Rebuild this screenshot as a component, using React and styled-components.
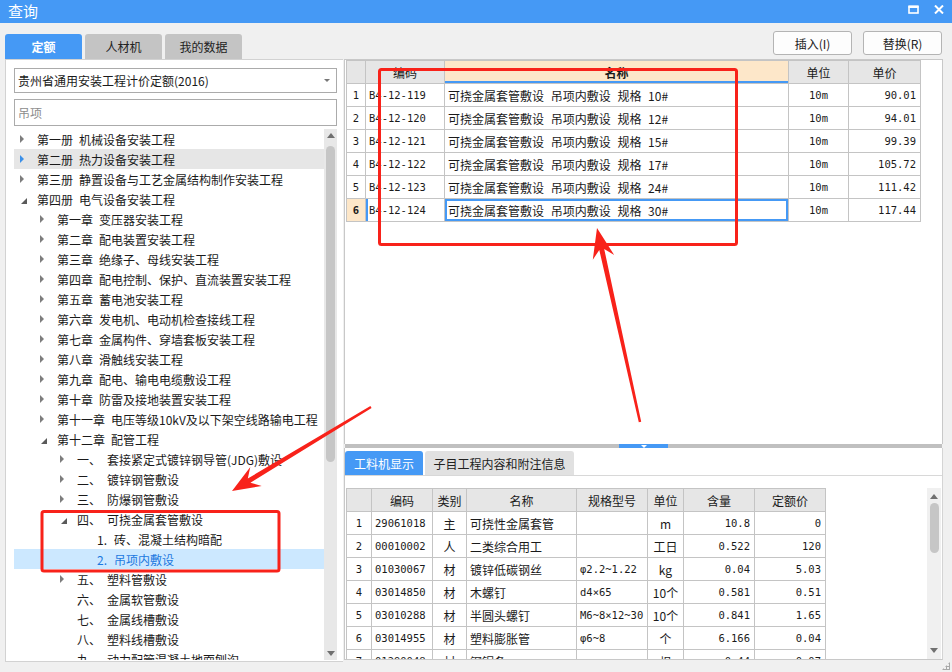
import React from 'react';
import styled, { createGlobalStyle } from 'styled-components';

const CJK = '"Noto Sans CJK SC", "Noto Sans", sans-serif';
const MONO = '"DejaVu Sans Mono", "Noto Sans CJK SC", monospace';

const GlobalStyle = createGlobalStyle`
  html, body { margin: 0; padding: 0; background: #f0f0f0; }
  body { font-family: ${CJK}; font-size: 12px; color: #1a1a1a; }
  * { box-sizing: border-box; }
`;

const Window = styled.div`
  position: relative;
  width: 952px;
  height: 672px;
  overflow: hidden;
  display: flex;
  flex-direction: column;
  background: #f0f0f0;
`;

const TitleBar = styled.div`
  height: 23px;
  flex: none;
  background: #4599f5;
  display: flex;
  align-items: center;
  justify-content: space-between;
  padding: 0 8px 0 8px;
  color: #fff;
  font-size: 15px;
  line-height: 23px;
`;

const TitleText = styled.span`
  margin-top: -3px;
`;

const WinButtons = styled.div`
  display: flex;
  align-items: center;
  gap: 15px;
  margin-top: -5px;
`;

const Toolbar = styled.div`
  height: 36px;
  flex: none;
  display: flex;
  justify-content: space-between;
  padding: 0 10px 0 5px;
`;

const Tabs = styled.div`
  display: flex;
  align-items: flex-end;
  gap: ${p => p.$gap}px;
`;

const Tab = styled.div`
  width: ${p => p.$w}px;
  height: ${p => p.$h}px;
  display: flex;
  align-items: center;
  justify-content: center;
  font-size: 12px;
  border-radius: 3px 3px 0 0;
  background: ${p => (p.$active ? '#4599f5' : p.$light ? '#e1e1e1' : '#c4c4c4')};
  color: ${p => (p.$active ? '#fff' : '#222')};
  font-weight: ${p => (p.$bold ? 700 : 400)};
`;

const Buttons = styled.div`
  display: flex;
  gap: 11px;
  padding-top: 8px;
`;

const Button = styled.div`
  width: ${p => p.$w}px;
  height: 24px;
  border: 1px solid #b4b4b4;
  border-radius: 3px;
  background: #fdfdfd;
  display: flex;
  align-items: center;
  justify-content: center;
  font-size: 12px;
  color: #222;
`;

const Main = styled.div`
  display: flex;
  height: 603px;
  padding-left: 5px;
`;

const LeftPanel = styled.div`
  width: 338px;
  flex: none;
  background: #fff;
  border: 1px solid #d2d2d2;
  border-right: none;
  display: flex;
  flex-direction: column;
  padding: 8px 6px 0 8px;
`;

const Select = styled.div`
  height: 25px;
  flex: none;
  border: 1px solid #ababab;
  display: flex;
  align-items: center;
  justify-content: space-between;
  padding: 0 6px 0 3px;
  font-size: 12px;
`;

const Caret = styled.span`
  width: 0;
  height: 0;
  border-left: 3px solid transparent;
  border-right: 3px solid transparent;
  border-top: 3px solid #777;
`;

const Search = styled.div`
  height: 27px;
  flex: none;
  margin-top: 6px;
  border: 1px solid #ababab;
  display: flex;
  align-items: center;
  padding: 0 3px;
  color: #8c8c8c;
  font-size: 12px;
`;

const TreeWrap = styled.div`
  flex: 1;
  margin-top: 3px;
  margin-bottom: 1px;
  display: flex;
  overflow: hidden;
`;

const TreeList = styled.div`
  flex: 1;
  overflow: hidden;
`;

const TreeRow = styled.div`
  height: 20px;
  display: flex;
  align-items: center;
  padding-left: ${p => 6 + p.$level * 20}px;
  background: ${p => (p.$sel ? '#cce8ff' : p.$hover ? '#e6e6e6' : 'transparent')};
  color: ${p => (p.$sel ? '#1c78e0' : '#1a1a1a')};
  white-space: nowrap;
  font-size: 12px;
`;

const Toggle = styled.span`
  width: 17px;
  height: 20px;
  flex: none;
  display: flex;
  align-items: center;
`;

const Collapsed = styled.span`
  width: 0;
  height: 0;
  border-left: 4px solid ${p => (p.$blue ? '#3b8fe8' : '#7d7d7d')};
  border-top: 4px solid transparent;
  border-bottom: 4px solid transparent;
`;

const Expanded = styled.span`
  width: 0;
  height: 0;
  margin-left: 1px;
  margin-top: 3px;
  border-bottom: 6px solid #5a5a5a;
  border-left: 6px solid transparent;
`;

const Label = styled.span`
  display: flex;
  gap: ${p => p.$gap}px;
`;

const VScroll = styled.div`
  width: ${p => p.$w}px;
  flex: none;
  background: ${p => p.$bg};
  display: flex;
  flex-direction: column;
  align-items: center;
  margin-right: ${p => p.$mr || 0}px;
`;

const ArrowUp = styled.span`
  width: 0;
  height: 0;
  margin-top: ${p => p.$mt}px;
  border-left: 4px solid transparent;
  border-right: 4px solid transparent;
  border-bottom: 5px solid #707070;
`;

const ArrowDown = styled.span`
  width: 0;
  height: 0;
  margin-top: auto;
  margin-bottom: ${p => p.$mb}px;
  border-left: 4px solid transparent;
  border-right: 4px solid transparent;
  border-top: 5px solid #707070;
`;

const Thumb = styled.span`
  width: 9px;
  height: ${p => p.$h}px;
  margin-top: ${p => p.$mt}px;
  border-radius: 5px;
  background: #c6c6c6;
`;

const RightCol = styled.div`
  width: 600px;
  flex: none;
  display: flex;
  flex-direction: column;
  padding-bottom: 2px;
`;

const UpperPanel = styled.div`
  height: 385px;
  flex: none;
  margin-left: 1px;
  background: #fff;
  border: 1px solid #c8c8c8;
  border-bottom: none;
  padding-left: 1px;
`;

const Splitter = styled.div`
  height: 4px;
  flex: none;
  margin-left: 2px;
  margin-right: 1px;
  display: flex;
  background: #c0c0c0;
`;

const SplitHandle = styled.div`
  width: 49px;
  margin-left: 274px;
  background: #4599f5;
  display: flex;
  justify-content: center;
  padding-top: 1px;
  &::after {
    content: '';
    width: 0;
    height: 0;
    border-left: 3px solid transparent;
    border-right: 3px solid transparent;
    border-top: 3px solid #fff;
  }
`;

const LowerPanel = styled.div`
  flex: 1;
  margin-left: 1px;
  background: #fff;
  border-left: 1px solid #c8c8c8;
  border-right: 1px solid #d4d4d4;
  border-bottom: 1px solid #c8c8c8;
  display: flex;
  flex-direction: column;
  overflow: hidden;
`;

const LowerTabs = styled.div`
  flex: none;
  padding-top: 3px;
  border-bottom: 1px solid #d8d8d8;
`;

const Gap = styled.div`
  height: 12px;
  flex: none;
`;

const GridArea = styled.div`
  flex: 1;
  display: flex;
  overflow: hidden;
  padding-left: 1px;
`;

const GridBox = styled.div`
  flex: 1;
  overflow: hidden;
`;

const Grid = styled.div`
  display: grid;
  grid-template-columns: ${p => p.$cols};
  border-left: 1px solid #c4c4c4;
  border-top: 1px solid #c4c4c4;
  width: max-content;
`;

const Cell = styled.div`
  height: 23px;
  border-right: 1px solid #c4c4c4;
  border-bottom: 1px solid #c4c4c4;
  display: flex;
  align-items: center;
  justify-content: ${p => (p.$align === 'right' ? 'flex-end' : p.$align === 'left' ? 'flex-start' : 'center')};
  padding: 0 ${p => (p.$align === 'right' ? 4 : 3)}px;
  background: ${p => p.$bg || '#fff'};
  font-family: ${p => (p.$mono ? MONO : CJK)};
  font-size: ${p => (p.$mono ? '10.5px' : '12px')};
  font-weight: ${p => (p.$bold ? 700 : 400)};
  white-space: nowrap;
  overflow: hidden;
  word-spacing: 4px;
  color: #1a1a1a;
  box-shadow: ${p => p.$shadow || 'none'};
`;

const Grip = styled.div`
  position: absolute;
  right: 2px;
  bottom: 2px;
  width: 8px;
  height: 8px;
  background-image: radial-gradient(circle, #a8a8a8 1px, transparent 1.2px);
  background-size: 3px 3px;
  clip-path: polygon(100% 0, 100% 100%, 0 100%);
`;

const Overlay = styled.svg`
  position: absolute;
  left: 0;
  top: 0;
  pointer-events: none;
`;

const tree = [
  { l: 0, t: 'c', p: '第一册', n: '机械设备安装工程' },
  { l: 0, t: 'c', p: '第二册', n: '热力设备安装工程', hover: true },
  { l: 0, t: 'c', p: '第三册', n: '静置设备与工艺金属结构制作安装工程' },
  { l: 0, t: 'e', p: '第四册', n: '电气设备安装工程' },
  { l: 1, t: 'c', p: '第一章', n: '变压器安装工程' },
  { l: 1, t: 'c', p: '第二章', n: '配电装置安装工程' },
  { l: 1, t: 'c', p: '第三章', n: '绝缘子、母线安装工程' },
  { l: 1, t: 'c', p: '第四章', n: '配电控制、保护、直流装置安装工程' },
  { l: 1, t: 'c', p: '第五章', n: '蓄电池安装工程' },
  { l: 1, t: 'c', p: '第六章', n: '发电机、电动机检查接线工程' },
  { l: 1, t: 'c', p: '第七章', n: '金属构件、穿墙套板安装工程' },
  { l: 1, t: 'c', p: '第八章', n: '滑触线安装工程' },
  { l: 1, t: 'c', p: '第九章', n: '配电、输电电缆敷设工程' },
  { l: 1, t: 'c', p: '第十章', n: '防雷及接地装置安装工程' },
  { l: 1, t: 'c', p: '第十一章', n: '电压等级10kV及以下架空线路输电工程' },
  { l: 1, t: 'e', p: '第十二章', n: '配管工程' },
  { l: 2, t: 'c', p: '一、', n: '套接紧定式镀锌钢导管(JDG)敷设' },
  { l: 2, t: 'c', p: '二、', n: '镀锌钢管敷设' },
  { l: 2, t: 'c', p: '三、', n: '防爆钢管敷设' },
  { l: 2, t: 'e', p: '四、', n: '可挠金属套管敷设' },
  { l: 3, t: 'n', p: '1.', n: '砖、混凝土结构暗配' },
  { l: 3, t: 'n', p: '2.', n: '吊项内敷设', sel: true },
  { l: 2, t: 'c', p: '五、', n: '塑料管敷设' },
  { l: 2, t: 'n', p: '六、', n: '金属软管敷设' },
  { l: 2, t: 'n', p: '七、', n: '金属线槽敷设' },
  { l: 2, t: 'n', p: '八、', n: '塑料线槽敷设' },
  { l: 2, t: 'n', p: '九、', n: '动力配管混凝土地面刨沟' },
];

const upper = [
  ['B4-12-119', '10#', '90.01'],
  ['B4-12-120', '12#', '94.01'],
  ['B4-12-121', '15#', '99.39'],
  ['B4-12-122', '17#', '105.72'],
  ['B4-12-123', '24#', '111.42'],
  ['B4-12-124', '30#', '117.44'],
];

const lower = [
  ['29061018', '主', '可挠性金属套管', '', 'm', '10.8', '0'],
  ['00010002', '人', '二类综合用工', '', '工日', '0.522', '120'],
  ['01030067', '材', '镀锌低碳钢丝', 'φ2.2~1.22', 'kg', '0.04', '5.03'],
  ['03014850', '材', '木螺钉', 'd4×65', '10个', '0.581', '0.51'],
  ['03010288', '材', '半圆头螺钉', 'M6~8×12~30', '10个', '0.841', '1.65'],
  ['03014955', '材', '塑料膨胀管', 'φ6~8', '个', '6.166', '0.04'],
  ['01290048', '材', '钢锯条', '', '根', '0.44', '0.07'],
];

const BLUE = '#4599f5';

function Tree() {
  return (
    <TreeWrap>
      <TreeList>
        {tree.map((r, i) => (
          <TreeRow key={i} $level={r.l} $hover={r.hover} $sel={r.sel}>
            <Toggle>
              {r.t === 'c' && <Collapsed $blue={r.hover} />}
              {r.t === 'e' && <Expanded />}
            </Toggle>
            <Label $gap={r.l === 3 ? 7 : 6}>
              <span>{r.p}</span>
              <span>{r.n}</span>
            </Label>
          </TreeRow>
        ))}
      </TreeList>
      <VScroll $w={13} $bg="#e8e8e8">
        <ArrowUp $mt={4} />
        <Thumb $h={316} $mt={8} />
        <ArrowDown $mb={4} />
      </VScroll>
    </TreeWrap>
  );
}

function UpperTable() {
  return (
    <Grid $cols="19px 79px 344px 60px 72px">
      <Cell $bg="#e6e6e6" />
      <Cell $bg="#e6e6e6">编码</Cell>
      <Cell $bg="#fde7c9" $bold $shadow={`inset 0 -2px 0 ${BLUE}`}>名称</Cell>
      <Cell $bg="#e6e6e6">单位</Cell>
      <Cell $bg="#e6e6e6">单价</Cell>
      {upper.map((r, i) => {
        const sel = i === upper.length - 1;
        return (
          <React.Fragment key={i}>
            <Cell $mono $bg={sel ? '#fde7c9' : '#fff'} $bold={sel}>{i + 1}</Cell>
            <Cell $mono $align="left" $shadow={sel ? `inset 2px 0 0 ${BLUE}` : undefined}>{r[0]}</Cell>
            <Cell $align="left" $shadow={sel ? `inset 0 0 0 2px ${BLUE}` : undefined}>
              可挠金属套管敷设 吊项内敷设 规格 {r[1]}
            </Cell>
            <Cell $mono>10m</Cell>
            <Cell $mono $align="right">{r[2]}</Cell>
          </React.Fragment>
        );
      })}
    </Grid>
  );
}

function LowerTable() {
  const heads = ['', '编码', '类别', '名称', '规格型号', '单位', '含量', '定额价'];
  return (
    <Grid $cols="25px 61px 34px 110px 71px 36px 71px 71px">
      {heads.map((h, i) => (
        <Cell key={i} $bg="#e6e6e6">{h}</Cell>
      ))}
      {lower.map((r, i) => (
        <React.Fragment key={i}>
          <Cell $mono>{i + 1}</Cell>
          <Cell $mono $align="left">{r[0]}</Cell>
          <Cell>{r[1]}</Cell>
          <Cell $align="left">{r[2]}</Cell>
          <Cell $mono $align="left">{r[3]}</Cell>
          <Cell>{r[4]}</Cell>
          <Cell $mono $align="right">{r[5]}</Cell>
          <Cell $mono $align="right">{r[6]}</Cell>
        </React.Fragment>
      ))}
    </Grid>
  );
}

function Annotations() {
  const red = '#f8221a';
  return (
    <Overlay width="952" height="672" viewBox="0 0 952 672">
      <rect x="379.5" y="69.5" width="357" height="175" rx="2" fill="none" stroke={red} strokeWidth="3" />
      <rect x="42" y="511.5" width="237" height="59.5" rx="2" fill="none" stroke={red} strokeWidth="3" />
      <polygon
        fill={red}
        points="371.6,408.0 250.4,482.8 261.7,485.9 232,491 250.3,467.1 247.8,478.5 370.4,406.0"
      />
      <polygon
        fill={red}
        points="641.2,421.7 604.2,248.9 614.2,254.9 597,228 592.8,259.7 599.3,250.0 638.8,422.3"
      />
    </Overlay>
  );
}

export default function App() {
  return (
    <>
      <GlobalStyle />
      <Window>
        <TitleBar>
          <TitleText>查询</TitleText>
          <WinButtons>
            <svg width="11" height="9" viewBox="0 0 11 9">
              <rect x="1" y="1.5" width="9" height="6.5" fill="none" stroke="#fff" strokeWidth="1.6" />
              <rect x="0.5" y="0.5" width="10" height="2.5" fill="#fff" />
            </svg>
            <svg width="10" height="9" viewBox="0 0 10 9">
              <path d="M1 0.5 L9 8.5 M9 0.5 L1 8.5" stroke="#fff" strokeWidth="2" />
            </svg>
          </WinButtons>
        </TitleBar>
        <Toolbar>
          <Tabs $gap={3}>
            <Tab $w={77} $h={25} $active $bold>定额</Tab>
            <Tab $w={77} $h={25}>人材机</Tab>
            <Tab $w={77} $h={25}>我的数据</Tab>
          </Tabs>
          <Buttons>
            <Button $w={79}>插入(I)</Button>
            <Button $w={79}>替换(R)</Button>
          </Buttons>
        </Toolbar>
        <Main>
          <LeftPanel>
            <Select>
              <span>贵州省通用安装工程计价定额(2016)</span>
              <Caret />
            </Select>
            <Search>吊项</Search>
            <Tree />
          </LeftPanel>
          <RightCol>
            <UpperPanel>
              <UpperTable />
            </UpperPanel>
            <Splitter>
              <SplitHandle />
            </Splitter>
            <LowerPanel>
              <LowerTabs>
                <Tabs $gap={2}>
                  <Tab $w={78} $h={24} $active>工料机显示</Tab>
                  <Tab $w={149} $h={24} $light>子目工程内容和附注信息</Tab>
                </Tabs>
              </LowerTabs>
              <Gap />
              <GridArea>
                <GridBox>
                  <LowerTable />
                </GridBox>
                <VScroll $w={14} $bg="#f0f0f0" $mr={1}>
                  <ArrowUp $mt={6} />
                  <Thumb $h={50} $mt={4} />
                  <ArrowDown $mb={6} />
                </VScroll>
              </GridArea>
            </LowerPanel>
          </RightCol>
        </Main>
        <Grip />
        <Annotations />
      </Window>
    </>
  );
}
